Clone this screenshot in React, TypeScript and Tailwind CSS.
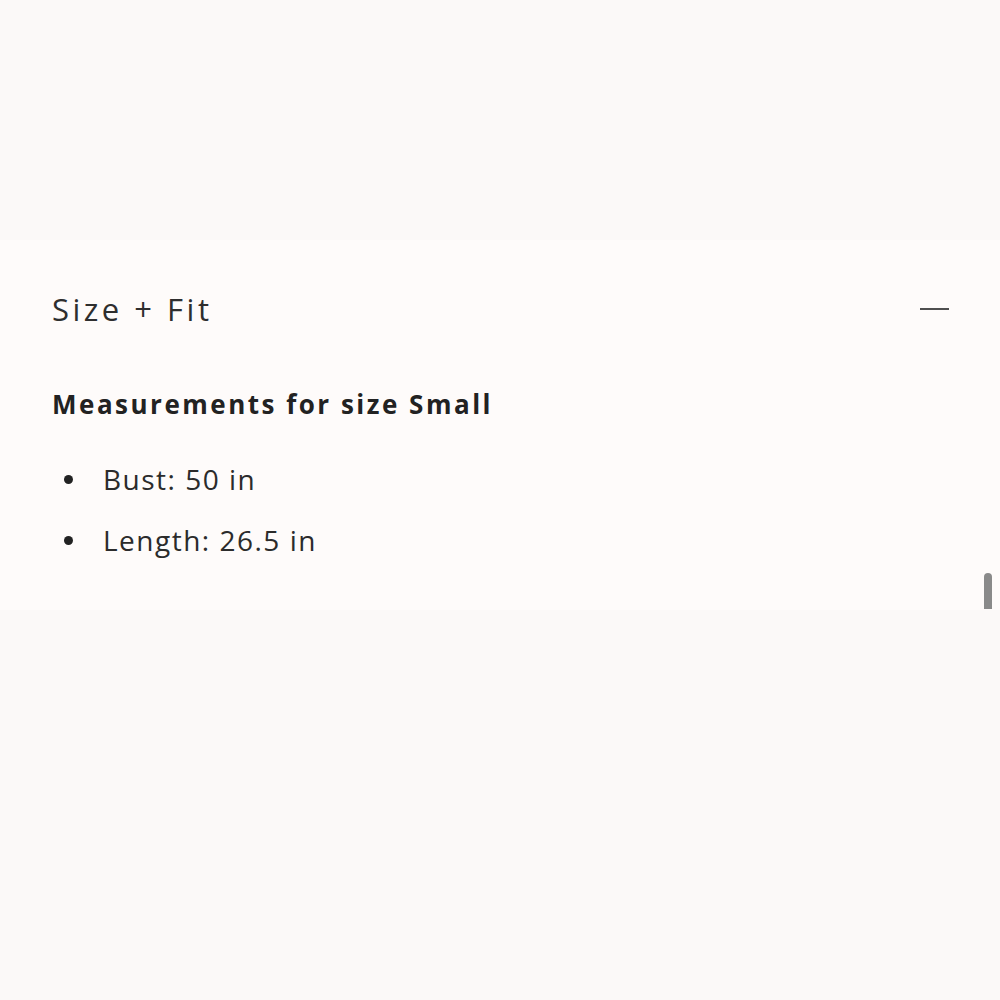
import React from 'react';

const items = ['Bust: 50 in', 'Length: 26.5 in'];

export default function App() {
  return (
    <div
      className="w-[1000px] h-[1000px] bg-[#fbf9f8] flex flex-col text-[#2b2b2b]"
      style={{ fontFamily: '"Open Sans", "Liberation Sans", sans-serif' }}
    >
      <div className="h-[240px] shrink-0" />

      {/* Accordion panel */}
      <section className="relative h-[370px] shrink-0 bg-[#fefbfa] pl-[52px] pr-[51px] pt-[49px]">
        <div className="flex items-center justify-between h-[40px]">
          <h2 className="text-[31px] leading-none tracking-[3.5px] text-[#2e2e2e]">Size + Fit</h2>
          <span className="block w-[29px] h-[2px] bg-[#4f4f4f]" />
        </div>

        <h3 className="mt-[62px] text-[26px] font-bold leading-none tracking-[2.5px] text-[#222]">
          Measurements for size Small
        </h3>

        <ul className="mt-[48px] flex flex-col gap-[33px]">
          {items.map((t) => (
            <li key={t} className="flex items-center h-[28px]">
              <span className="w-[9px] h-[9px] rounded-full bg-[#222] ml-[12px] mr-[30px]" />
              <span className="text-[28px] leading-none tracking-[1.5px] text-[#2b2b2b]">{t}</span>
            </li>
          ))}
        </ul>

        {/* scrollbar thumb */}
        <div className="absolute right-[8px] bottom-[1px] w-[8px] h-[36px] rounded-t-full bg-[#8a8a8a]" />
      </section>

      <div className="flex-1" />
    </div>
  );
}
